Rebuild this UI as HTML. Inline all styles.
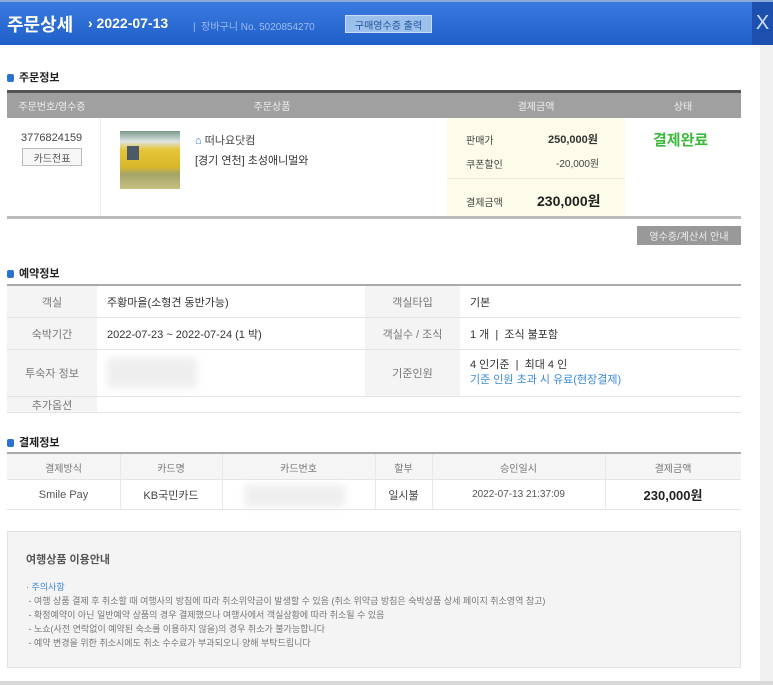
<!DOCTYPE html>
<html><head><meta charset="utf-8"><style>
*{margin:0;padding:0;box-sizing:border-box}
body{width:773px;height:685px;overflow:hidden;background:#fff;font-family:"Liberation Sans","Noto Sans CJK KR",sans-serif;color:#444;position:relative;font-size:11px}
.a{position:absolute}
.hdr{left:0;top:0;width:773px;height:45px;background:linear-gradient(#3a7ae0,#1f5fc8);border-top:2px solid #8aa9d8}
.sec{font-weight:bold;font-size:11px;color:#222}
.sec:before{content:"";display:inline-block;width:7px;height:8px;background:#2a73d4;border-radius:2px;margin-right:5px;vertical-align:-1px}
.c{display:flex;align-items:center;justify-content:center}
.lbl{background:#f4f4f4;color:#777;border-bottom:1px solid #e4e4e4}
.val{border-bottom:1px solid #e4e4e4;padding-left:10px;display:flex;align-items:center;color:#333}
.vs{position:absolute;width:1px;background:#e8e8e8}
</style></head><body>
<div class="a hdr"></div>
<div class="a" style="left:7px;top:11px;color:#fff;font-size:18px;font-weight:bold">주문상세</div>
<div class="a" style="left:88px;top:15px;color:#fff;font-size:14px;font-weight:bold">› 2022-07-13</div>
<div class="a" style="left:193px;top:18px;color:#9fbdf0;font-size:10px">|&nbsp; 장바구니 No. 5020854270</div>
<div class="a c" style="left:345px;top:15px;width:87px;height:18px;background:#9cc0ec;color:#1f4f99;font-size:10px;border:1px solid #c9dcf5">구매영수증 출력</div>
<div class="a c" style="left:752px;top:2px;width:21px;height:43px;background:#1c4fae;color:#cfe0ff;font-size:20px">X</div>
<div class="a" style="left:760px;top:45px;width:13px;height:640px;background:#f0f0f0"></div>
<div class="a" style="left:0;top:681px;width:773px;height:4px;background:#d8d8d8"></div>

<div class="a sec" style="left:7px;top:69px">주문정보</div>
<div class="a" style="left:7px;top:90px;width:734px;height:28px;background:#a0a0a0;border-top:3px solid #555"></div>
<div class="a c" style="left:7px;top:93px;width:90px;height:25px;color:#eee;font-size:10px">주문번호/영수증</div>
<div class="a c" style="left:97px;top:93px;width:350px;height:25px;color:#eee;font-size:10px">주문상품</div>
<div class="a c" style="left:447px;top:93px;width:178px;height:25px;color:#eee;font-size:10px">결제금액</div>
<div class="a c" style="left:625px;top:93px;width:116px;height:25px;color:#eee;font-size:10px">상태</div>
<div class="a" style="left:100px;top:118px;width:1px;height:99px;background:#eee"></div>
<div class="a" style="left:447px;top:118px;width:178px;height:99px;background:#fdfbe9"></div>
<div class="a" style="left:447px;top:178px;width:178px;height:1px;background:#efeadb"></div>
<div class="a" style="left:7px;top:216px;width:734px;height:3px;background:#bbb"></div>
<div class="a" style="left:21px;top:132px;font-size:11px;color:#444">3776824159</div>
<div class="a c" style="left:22px;top:148px;width:60px;height:18px;border:1px solid #bbb;background:#f7f7f7;font-size:10px;color:#555">카드전표</div>
<div class="a" style="left:120px;top:131px;width:60px;height:58px;background:linear-gradient(#7a9a88 0,#dde4e4 18%,#e6c53a 32%,#d9b72a 62%,#a4a468 74%,#c8c080 100%)"></div>
<div class="a" style="left:127px;top:146px;width:12px;height:14px;background:#4a5a66"></div>
<div class="a" style="left:195px;top:132px;font-size:11px;color:#444"><span style="color:#2a73d4">⌂</span> 떠나요닷컴</div>
<div class="a" style="left:195px;top:152px;font-size:11px;color:#333">[경기 연천] 초성애니멀와</div>
<div class="a" style="left:466px;top:132px;font-size:10px">판매가</div>
<div class="a" style="left:548px;top:131px;font-size:11px;font-weight:bold;color:#333">250,000원</div>
<div class="a" style="left:466px;top:156px;font-size:10px">쿠폰할인</div>
<div class="a" style="left:556px;top:155px;font-size:10px">-20,000원</div>
<div class="a" style="left:466px;top:194px;font-size:10px">결제금액</div>
<div class="a" style="left:537px;top:191px;font-size:14px;font-weight:bold;color:#222">230,000원</div>
<div class="a" style="left:653px;top:129px;font-size:15px;font-weight:bold;color:#3cb83c">결제완료</div>
<div class="a c" style="left:637px;top:226px;width:104px;height:19px;background:#999;color:#eee;font-size:10px">영수증/계산서 안내</div>

<div class="a sec" style="left:7px;top:265px">예약정보</div>
<div class="a" style="left:7px;top:284px;width:734px;height:2px;background:#aaa"></div>
<div class="a c lbl" style="left:7px;top:286px;width:90px;height:32px">객실</div>
<div class="a val" style="left:97px;top:286px;width:268px;height:32px">주황마을(소형견 동반가능)</div>
<div class="a c lbl" style="left:365px;top:286px;width:95px;height:32px">객실타입</div>
<div class="a val" style="left:460px;top:286px;width:281px;height:32px">기본</div>
<div class="a c lbl" style="left:7px;top:318px;width:90px;height:32px">숙박기간</div>
<div class="a val" style="left:97px;top:318px;width:268px;height:32px">2022-07-23 ~ 2022-07-24 (1 박)</div>
<div class="a c lbl" style="left:365px;top:318px;width:95px;height:32px">객실수 / 조식</div>
<div class="a val" style="left:460px;top:318px;width:281px;height:32px">1 개 &nbsp;|&nbsp; 조식 불포함</div>
<div class="a c lbl" style="left:7px;top:350px;width:90px;height:47px">투숙자 정보</div>
<div class="a val" style="left:97px;top:350px;width:268px;height:47px"><div style="width:90px;height:30px;background:#eee;filter:blur(4px)"></div></div>
<div class="a c lbl" style="left:365px;top:350px;width:95px;height:47px">기준인원</div>
<div class="a" style="left:460px;top:350px;width:281px;height:47px;border-bottom:1px solid #e4e4e4;padding:8px 10px;line-height:15px;color:#333">4 인기준 &nbsp;|&nbsp; 최대 4 인<br><span style="color:#3b8ad8">기준 인원 초과 시 유료(현장결제)</span></div>
<div class="a c lbl" style="left:7px;top:397px;width:90px;height:16px">추가옵션</div>
<div class="a" style="left:97px;top:412px;width:644px;height:1px;background:#e4e4e4"></div>

<div class="a sec" style="left:7px;top:434px">결제정보</div>
<div class="a" style="left:7px;top:452px;width:734px;height:2px;background:#aaa"></div>
<div class="a" style="left:7px;top:454px;width:734px;height:26px;background:#f5f5f5;border-bottom:1px solid #e4e4e4"></div>
<div class="a" style="left:7px;top:509px;width:734px;height:1px;background:#e4e4e4"></div>
<div class="vs" style="left:120px;top:454px;height:55px"></div>
<div class="vs" style="left:222px;top:454px;height:55px"></div>
<div class="vs" style="left:375px;top:454px;height:55px"></div>
<div class="vs" style="left:432px;top:454px;height:55px"></div>
<div class="vs" style="left:605px;top:454px;height:55px"></div>
<div class="a c" style="left:7px;top:454px;width:113px;height:26px;color:#777;font-size:10px">결제방식</div>
<div class="a c" style="left:120px;top:454px;width:102px;height:26px;color:#777;font-size:10px">카드명</div>
<div class="a c" style="left:222px;top:454px;width:153px;height:26px;color:#777;font-size:10px">카드번호</div>
<div class="a c" style="left:375px;top:454px;width:57px;height:26px;color:#777;font-size:10px">할부</div>
<div class="a c" style="left:432px;top:454px;width:173px;height:26px;color:#777;font-size:10px">승인일시</div>
<div class="a c" style="left:605px;top:454px;width:136px;height:26px;color:#777;font-size:10px">결제금액</div>
<div class="a c" style="left:7px;top:480px;width:113px;height:29px;color:#555">Smile Pay</div>
<div class="a c" style="left:120px;top:480px;width:102px;height:29px;color:#444">KB국민카드</div>
<div class="a" style="left:245px;top:485px;width:100px;height:22px;background:#eee;filter:blur(4px)"></div>
<div class="a c" style="left:375px;top:480px;width:57px;height:29px;color:#444">일시불</div>
<div class="a c" style="left:432px;top:480px;width:173px;height:29px;color:#555;font-size:10px">2022-07-13 21:37:09</div>
<div class="a c" style="left:605px;top:480px;width:136px;height:29px;color:#222;font-size:13px;font-weight:bold">230,000원</div>

<div class="a" style="left:7px;top:531px;width:734px;height:137px;background:#f4f4f4;border:1px solid #e2e2e2"></div>
<div class="a" style="left:26px;top:551px;font-size:11px;font-weight:bold;color:#555">여행상품 이용안내</div>
<div class="a" style="left:26px;top:580px;font-size:9px;line-height:14px;color:#777">· <span style="color:#3b8ad8">주의사항</span><br>
&nbsp;- 여행 상품 결제 후 취소할 때 여행사의 방침에 따라 취소위약금이 발생할 수 있음 (취소 위약금 방침은 숙박상품 상세 페이지 취소영역 참고)<br>
&nbsp;- 확정예약이 아닌 일반예약 상품의 경우 결제했으나 여행사에서 객실상황에 따라 취소될 수 있음<br>
&nbsp;- 노쇼(사전 연락없이 예약된 숙소를 이용하지 않을)의 경우 취소가 불가능합니다<br>
&nbsp;- 예약 변경을 위한 취소시에도 취소 수수료가 부과되오니 양해 부탁드립니다</div>
</body></html>
